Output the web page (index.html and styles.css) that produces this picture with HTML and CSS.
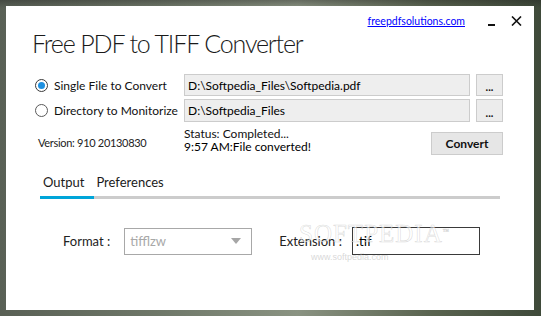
FILE: index.html
```html
<!DOCTYPE html>
<html>
<head>
	<title>Free PDF to TIFF Converter</title>
	<meta charset="utf-8"/>
	<link rel="stylesheet" href="styles.css">
</head>
<body>

<div class="window">
	<div class="topbar">
		<a class="site" href="#">freepdfsolutions.com</a>
		<span class="min"></span>
		<span class="close">
			<svg width="11" height="10" viewBox="0 0 11 10"><path d="M1 0.5 L10 9.5 M10 0.5 L1 9.5" stroke="#111" stroke-width="1.6" fill="none"/></svg>
		</span>
	</div>

	<h1 class="title">Free PDF to TIFF Converter</h1>

	<div class="sources">
		<label class="radio checked"><span class="dot"></span>Single File to Convert</label>
		<div class="field">D:\Softpedia_Files\Softpedia.pdf</div>
		<div class="browse">...</div>

		<label class="radio"><span class="dot"></span>Directory to Monitorize</label>
		<div class="field">D:\Softpedia_Files</div>
		<div class="browse">...</div>
	</div>

	<div class="status-row">
		<div class="version">Version: 910 20130830</div>
		<div class="status">
			<div>Status: Completed...</div>
			<div class="done">9:57 AM:File converted!</div>
		</div>
		<div class="convert">Convert</div>
	</div>

	<div class="tabs">
		<span class="tab active">Output</span>
		<span class="tab">Preferences</span>
	</div>
	<div class="tabbar"><div class="tabbar-fill"></div></div>

	<div class="options">
		<span class="opt-label">Format :</span>
		<div class="select">
			<span>tifflzw</span>
			<svg width="10" height="6" viewBox="0 0 10 6"><path d="M0 0 H10 L5 6 Z" fill="#a6a6a6"/></svg>
		</div>
		<span class="opt-label ext">Extension :</span>
		<div class="input">.tif</div>
	</div>

	<div class="watermark">SOFTPEDIA<sup>™</sup></div>
	<div class="watermark-url">www.softpedia.com</div>
</div>

</body>
</html>
```
FILE: styles.css
```css
* {
	box-sizing: border-box;
}

body {
	margin: 0;
	width: 541px;
	height: 316px;
	overflow: hidden;
	font-family: "Lato", sans-serif;
	color: #111;
	background:
		linear-gradient(180deg, rgba(30,30,30,0.35) 0, rgba(30,30,30,0) 8px),
		linear-gradient(90deg, #596055 0%, #6f7869 30%, #8a9382 55%, #59634f 80%, #3f4a3a 100%);
}

.window {
	position: relative;
	margin: 6px 0 0 6px;
	width: 528px;
	height: 304px;
	background: #ffffff;
	display: flex;
	flex-direction: column;
}

/* top right corner */
.topbar {
	display: flex;
	justify-content: flex-end;
	align-items: center;
	height: 22px;
	padding: 8px 12px 0 0;
}

.site {
	font-size: 10.5px;
	color: #0000ff;
	text-decoration: underline;
	margin-right: 23px;
}

.min {
	width: 7px;
	height: 2px;
	margin-top: 7px;
	background: #111;
	margin-right: 16px;
}

.close {
	display: flex;
	margin-top: -1px;
}

.title {
	margin: 0 0 0 26px;
	font-size: 25px;
	font-weight: 300;
	letter-spacing: -1.15px;
	line-height: 30px;
	color: #1a1a1a;
}

/* source rows */
.sources {
	display: grid;
	grid-template-columns: 143px 286px 27px;
	grid-template-rows: 22px 23px;
	column-gap: 6px;
	row-gap: 3px;
	margin: 16px 0 0 29px;
	font-size: 12px;
}

.radio {
	display: flex;
	align-items: center;
	gap: 6px;
	white-space: nowrap;
	color: #111;
}

.dot {
	flex: none;
	width: 13px;
	height: 13px;
	border: 1px solid #5a5a5a;
	border-radius: 50%;
	display: flex;
	align-items: center;
	justify-content: center;
}

.radio.checked .dot {
	border-color: #3a3a3a;
}

.radio.checked .dot::after {
	content: "";
	width: 7px;
	height: 7px;
	border-radius: 50%;
	background: #1e90e0;
}

.field {
	background: #eeeeee;
	border: 1px solid #cccccc;
	padding: 0 3px;
	display: flex;
	align-items: center;
	color: #000;
}

.browse {
	background: #ececec;
	border: 1px solid #cccccc;
	display: flex;
	justify-content: center;
	align-items: center;
	font-weight: bold;
	font-size: 11px;
	padding-top: 3px;
}

/* status */
.status-row {
	display: flex;
	align-items: flex-start;
	margin-top: 5px;
	font-size: 12px;
}

.version {
	margin: 9px 0 0 32px;
	width: 146px;
	font-size: 11px;
	letter-spacing: -0.3px;
	line-height: 13px;
	color: #222;
}

.status {
	line-height: 13px;
	width: 247px;
	color: #111;
}

.status .done {
	color: #000;
}

.convert {
	margin-top: 5px;
	width: 72px;
	height: 23px;
	background: #e6e6e6;
	border: 1px solid #cccccc;
	display: flex;
	align-items: center;
	justify-content: center;
	font-weight: bold;
	color: #111;
}

/* tabs */
.tabs {
	display: flex;
	gap: 12px;
	margin: 19px 0 0 37px;
	font-size: 13px;
	line-height: 16px;
	height: 22px;
	color: #1a1a1a;
}

.tabbar {
	margin-left: 34px;
	width: 460px;
	height: 3px;
	background: #cccccc;
}

.tabbar-fill {
	width: 54px;
	height: 3px;
	background: #00a5d9;
}

/* output options */
.options {
	display: flex;
	align-items: center;
	margin: 28px 0 0 57px;
	font-size: 13px;
	color: #222;
}

.opt-label {
	margin-right: 14px;
}

.opt-label.ext {
	margin-left: 27px;
	margin-right: 10px;
}

.select {
	width: 128px;
	height: 27px;
	border: 1px solid #a8a8a8;
	display: flex;
	align-items: center;
	justify-content: space-between;
	padding: 0 10px 0 5px;
	color: #a8a8a8;
}

.input {
	width: 128px;
	height: 28px;
	border: 1.5px solid #3a3a3a;
	display: flex;
	align-items: center;
	padding: 0 3px;
	color: #000;
}

/* site watermark over the content */
.watermark {
	position: absolute;
	left: 293px;
	top: 214px;
	font-family: "Liberation Serif", serif;
	font-size: 25px;
	letter-spacing: 1px;
	color: rgba(255,255,255,0.6);
	-webkit-text-stroke: 0.6px rgba(150,150,150,0.35);
	pointer-events: none;
}

.watermark sup {
	font-size: 6px;
}

.watermark-url {
	position: absolute;
	left: 305px;
	top: 246px;
	font-family: "Liberation Sans", sans-serif;
	font-size: 9px;
	color: rgba(190,190,190,0.6);
	pointer-events: none;
}
```
